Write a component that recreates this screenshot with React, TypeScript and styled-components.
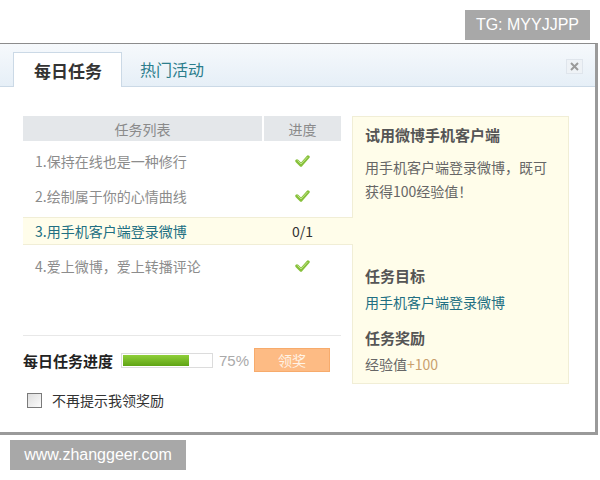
import React from 'react'
import styled, { createGlobalStyle } from 'styled-components'

const GlobalStyle = createGlobalStyle`
  html, body {
    margin: 0;
    padding: 0;
    background: #fff;
    font-family: "Noto Sans CJK SC", "Noto Sans", sans-serif;
  }
`

const Page = styled.div`
  width: 600px;
  height: 480px;
  display: flex;
  flex-direction: column;
  overflow: hidden;
`

const TopBar = styled.div`
  height: 43px;
  display: flex;
  justify-content: flex-end;
  align-items: flex-start;
  padding: 10px 10px 0 0;
  box-sizing: border-box;
`

const Tag = styled.div`
  height: 30px;
  padding: 0 11px;
  background: #a8a8a8;
  color: #fff;
  font-family: "Liberation Sans", Arial, sans-serif;
  font-size: 16px;
  line-height: 30px;
`

const Dialog = styled.div`
  width: 598px;
  height: 392px;
  box-sizing: border-box;
  border-top: 1px solid #8c8c8c;
  border-right: 3px solid #9a9a9a;
  border-bottom: 3px solid #9a9a9a;
  display: flex;
  flex-direction: column;
  background: #fff;
`

const Header = styled.div`
  position: relative;
  height: 43px;
  box-sizing: border-box;
  padding: 8px 0 0 13px;
  background: linear-gradient(to bottom, #f6f9fc, #e6eff7);
  border-bottom: 1px solid #cbd9e6;
  display: flex;
  align-items: flex-end;
`

const Tab = styled.div<{ $active?: boolean }>`
  height: ${p => (p.$active ? '35px' : '34px')};
  margin-bottom: ${p => (p.$active ? '-1px' : '0')};
  box-sizing: border-box;
  padding: ${p => (p.$active ? '0 19px 0 20px' : '0 18px')};
  display: flex;
  align-items: center;
  font-size: ${p => (p.$active ? '17px' : '16px')};
  font-weight: ${p => (p.$active ? 700 : 400)};
  color: ${p => (p.$active ? '#333' : '#2b7d8c')};
  background: ${p => (p.$active ? '#fff' : 'transparent')};
  border: ${p => (p.$active ? '1px solid #cbd9e6' : 'none')};
  border-bottom: none;
`

const CloseButton = styled.div`
  position: absolute;
  right: 12px;
  top: 15px;
  width: 17px;
  height: 15px;
  box-sizing: border-box;
  background: #eef2f6;
  border: 1px solid #dfe5ec;
  display: flex;
  align-items: center;
  justify-content: center;
`

const Body = styled.div`
  flex: 1;
  display: flex;
  padding: 29px 0 0 23px;
  box-sizing: border-box;
`

const LeftColumn = styled.div`
  width: 318px;
  display: flex;
  flex-direction: column;
`

const TableHead = styled.div`
  display: flex;
  height: 25px;
  gap: 2px;
`

const HeadCell = styled.div<{ $w: number }>`
  width: ${p => p.$w}px;
  background: #e4e7ea;
  color: #8a8a8a;
  font-size: 14px;
  display: flex;
  align-items: center;
  justify-content: center;
`

const Rows = styled.div`
  display: flex;
  flex-direction: column;
  gap: 7px;
  padding-top: 6px;
`

const Row = styled.div<{ $current?: boolean }>`
  height: 28px;
  box-sizing: border-box;
  width: ${p => (p.$current ? '330px' : '318px')};
  position: relative;
  z-index: 2;
  display: flex;
  align-items: center;
  background: ${p => (p.$current ? '#fffdea' : 'transparent')};
  border-top: 1px solid ${p => (p.$current ? '#f1eed6' : 'transparent')};
  border-bottom: 1px solid ${p => (p.$current ? '#f1eed6' : 'transparent')};
`

const TaskName = styled.div<{ $current?: boolean }>`
  width: 241px;
  padding-left: 12px;
  box-sizing: border-box;
  font-size: 14px;
  color: ${p => (p.$current ? '#216f82' : '#8c8c8c')};
`

const Progress = styled.div`
  width: 77px;
  display: flex;
  justify-content: center;
  font-size: 14px;
  color: #333;
`

const Spacer = styled.div`
  flex: 1;
`

const Separator = styled.div`
  height: 1px;
  background: #e8e8e8;
`

const ProgressRow = styled.div`
  display: flex;
  align-items: center;
  height: 24px;
  margin-top: 12px;
`

const ProgressLabel = styled.div`
  font-size: 15px;
  font-weight: 700;
  color: #222;
  width: 98px;
`

const Bar = styled.div`
  width: 92px;
  height: 15px;
  box-sizing: border-box;
  border: 1px solid #dcdcdc;
  background: #fff;
  padding: 1px;
`

const BarFill = styled.div`
  height: 100%;
  background: linear-gradient(to bottom, #8fcf3a, #5fa414);
`

const Percent = styled.div`
  font-family: "Liberation Sans", Arial, sans-serif;
  font-size: 15px;
  color: #aaa;
  margin-left: 6px;
  width: 35px;
`

const RewardButton = styled.div`
  width: 76px;
  height: 24px;
  box-sizing: border-box;
  background: #fdbb84;
  border: 1px solid #f7ab6c;
  color: #fff3e6;
  font-size: 14px;
  display: flex;
  align-items: center;
  justify-content: center;
`

const CheckRow = styled.label`
  display: flex;
  align-items: center;
  gap: 10px;
  margin: 18px 0 22px 4px;
  font-size: 14px;
  color: #333;
`

const Box = styled.span`
  width: 15px;
  height: 15px;
  box-sizing: border-box;
  border: 1px solid #7a7a7a;
  background: linear-gradient(135deg, #dedede, #fbfbfb);
`

const InfoPanel = styled.div`
  margin-left: 11px;
  width: 217px;
  height: 268px;
  box-sizing: border-box;
  background: #fffdea;
  border: 1px solid #f1eed6;
  padding: 7px 20px 0 12px;
  display: flex;
  flex-direction: column;
`

const InfoTitle = styled.div<{ $gap?: number }>`
  font-size: 15px;
  font-weight: 700;
  color: #555;
  line-height: 22px;
  margin-top: ${p => p.$gap ?? 0}px;
`

const InfoText = styled.div<{ $gap?: number; $link?: boolean }>`
  font-size: 14px;
  color: ${p => (p.$link ? '#216f82' : '#666')};
  line-height: 24px;
  margin-top: ${p => p.$gap ?? 0}px;
`

const Bonus = styled.span`
  color: #c9a06e;
`

const Footer = styled.div`
  margin: 5px 0 0 10px;
  width: 176px;
  height: 30px;
  background: #a8a8a8;
  color: #fff;
  font-family: "Liberation Sans", Arial, sans-serif;
  font-size: 16px;
  line-height: 30px;
  text-align: center;
`

const Check = () => (
  <svg width="15" height="12" viewBox="0 0 15 12">
    <polyline points="2,6 6,10 13,2" fill="none" stroke="#86c03a" strokeWidth="3.4" strokeLinejoin="round" strokeLinecap="round" />
    <polyline points="2.5,5.5 6,9 12.5,2" fill="none" stroke="#bfe487" strokeWidth="1" strokeLinejoin="round" />
  </svg>
)

const tasks = [
  { name: '1.保持在线也是一种修行', done: true },
  { name: '2.绘制属于你的心情曲线', done: true },
  { name: '3.用手机客户端登录微博', done: false, progress: '0/1' },
  { name: '4.爱上微博，爱上转播评论', done: true },
]

export default function App() {
  return (
    <Page>
      <GlobalStyle />
      <TopBar>
        <Tag>TG: MYYJJPP</Tag>
      </TopBar>
      <Dialog>
        <Header>
          <Tab $active>每日任务</Tab>
          <Tab>热门活动</Tab>
          <CloseButton>
            <svg width="9" height="9" viewBox="0 0 9 9">
              <path d="M1 1 L8 8 M8 1 L1 8" stroke="#9a9a9a" strokeWidth="2" />
            </svg>
          </CloseButton>
        </Header>
        <Body>
          <LeftColumn>
            <TableHead>
              <HeadCell $w={239}>任务列表</HeadCell>
              <HeadCell $w={77}>进度</HeadCell>
            </TableHead>
            <Rows>
              {tasks.map(t => (
                <Row key={t.name} $current={!t.done}>
                  <TaskName $current={!t.done}>{t.name}</TaskName>
                  <Progress>{t.done ? <Check /> : t.progress}</Progress>
                </Row>
              ))}
            </Rows>
            <Spacer />
            <Separator />
            <ProgressRow>
              <ProgressLabel>每日任务进度</ProgressLabel>
              <Bar>
                <BarFill style={{ width: '75%' }} />
              </Bar>
              <Percent>75%</Percent>
              <RewardButton>领奖</RewardButton>
            </ProgressRow>
            <CheckRow>
              <Box />
              不再提示我领奖励
            </CheckRow>
          </LeftColumn>
          <InfoPanel>
            <InfoTitle>试用微博手机客户端</InfoTitle>
            <InfoText $gap={9}>用手机客户端登录微博，既可获得100经验值！</InfoText>
            <InfoTitle $gap={62}>任务目标</InfoTitle>
            <InfoText $gap={3} $link>用手机客户端登录微博</InfoText>
            <InfoTitle $gap={13}>任务奖励</InfoTitle>
            <InfoText $gap={3}>
              经验值<Bonus>+100</Bonus>
            </InfoText>
          </InfoPanel>
        </Body>
      </Dialog>
      <Footer>www.zhanggeer.com</Footer>
    </Page>
  )
}
